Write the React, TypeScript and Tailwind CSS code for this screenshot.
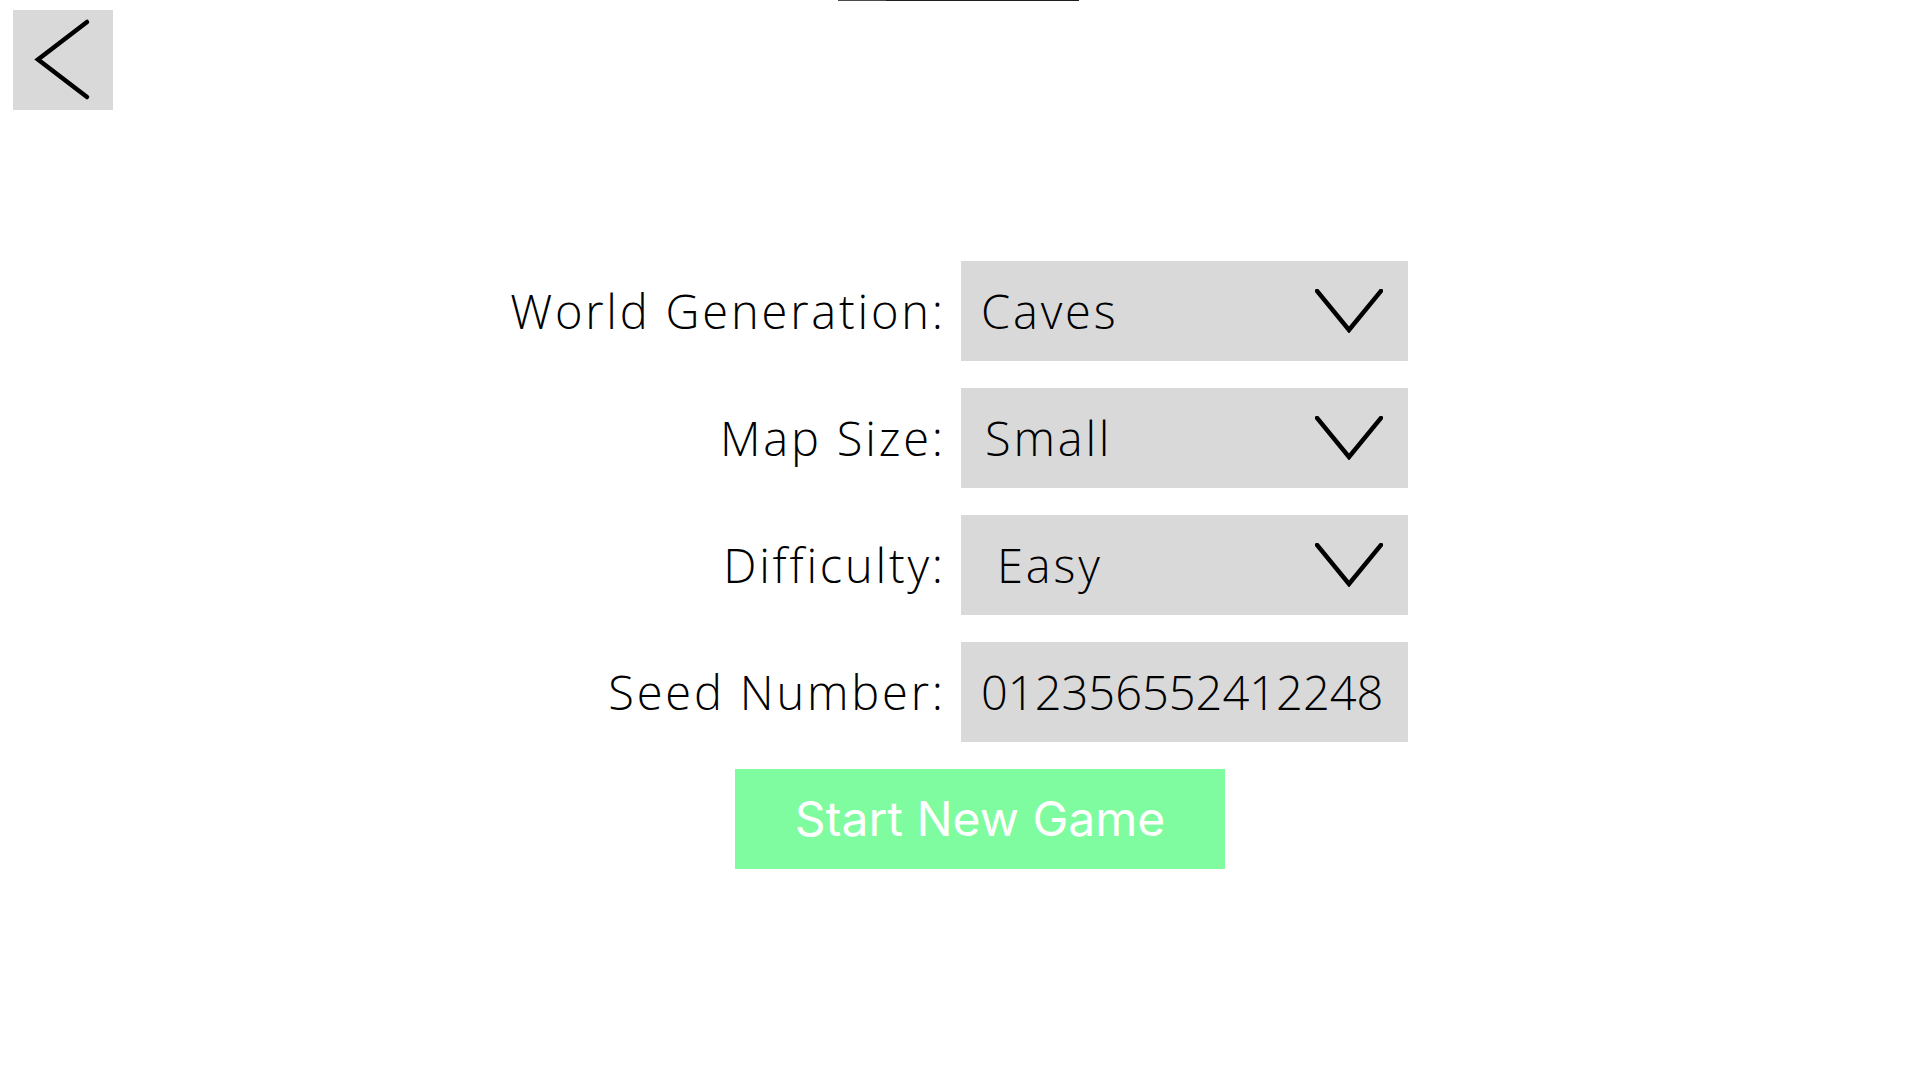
import React from "react";

const labelFont = { fontFamily: '"Open Sans", "DejaVu Sans", sans-serif' };

function Chevron() {
  return (
    <svg width="68" height="44" viewBox="0 0 68 44" className="shrink-0">
      <path d="M2 2 L34 41 L66 2" fill="none" stroke="#000" strokeWidth="4.5" strokeLinecap="square" strokeLinejoin="miter" />
    </svg>
  );
}

function Row({ label, value, pl, chevron = true, valueTrack = "tracking-[2.8px]" }: { label: string; value: string; pl: string; chevron?: boolean; valueTrack?: string }) {
  return (
    <>
      <div className="flex items-center justify-end text-[47px] font-light text-black tracking-[2.8px]" style={labelFont}>
        <span className="mr-[-2.8px]">{label}</span>
      </div>
      <div className={`flex h-[100px] items-center justify-between bg-[#d9d9d9] pr-[25px] ${pl}`}>
        <span className={`text-[47px] font-light text-black ${valueTrack}`} style={labelFont}>{value}</span>
        {chevron && <Chevron />}
      </div>
    </>
  );
}

export default function App() {
  return (
    <div className="relative h-[1080px] w-[1918px] overflow-hidden bg-white">
      <div className="ml-[838px] flex h-px w-[241px]">
        <div className="h-px w-[48px] bg-[#4a4a4a]" />
        <div className="h-px flex-1 bg-[#1e1e1e]" />
      </div>
      <button className="ml-[13px] mt-[9px] flex h-[100px] w-[100px] items-center justify-center bg-[#d9d9d9]">
        <svg width="100" height="100" viewBox="0 0 100 100">
          <path d="M74 12 L25 49.5 L74 87" fill="none" stroke="#000" strokeWidth="4.5" strokeLinecap="round" strokeLinejoin="miter" />
        </svg>
      </button>
      <div className="ml-[508px] mt-[151px] grid w-[900px] grid-cols-[435px_447px] gap-x-[18px] gap-y-[27px]">
        <Row label="World Generation:" value="Caves" pl="pl-[20px]" />
        <Row label="Map Size:" value="Small" pl="pl-[24px]" />
        <Row label="Difficulty:" value="Easy" pl="pl-[36px]" />
        <Row label="Seed Number:" value="012356552412248" pl="pl-[20px]" chevron={false} valueTrack="tracking-[0px]" />
      </div>
      <button
        className="ml-[735px] mt-[27px] flex h-[100px] w-[490px] items-center justify-center bg-[#80fca0] text-[48px] text-white"
        style={{ fontFamily: 'Inter, Roboto, sans-serif' }}
      >
        Start New Game
      </button>
    </div>
  );
}
